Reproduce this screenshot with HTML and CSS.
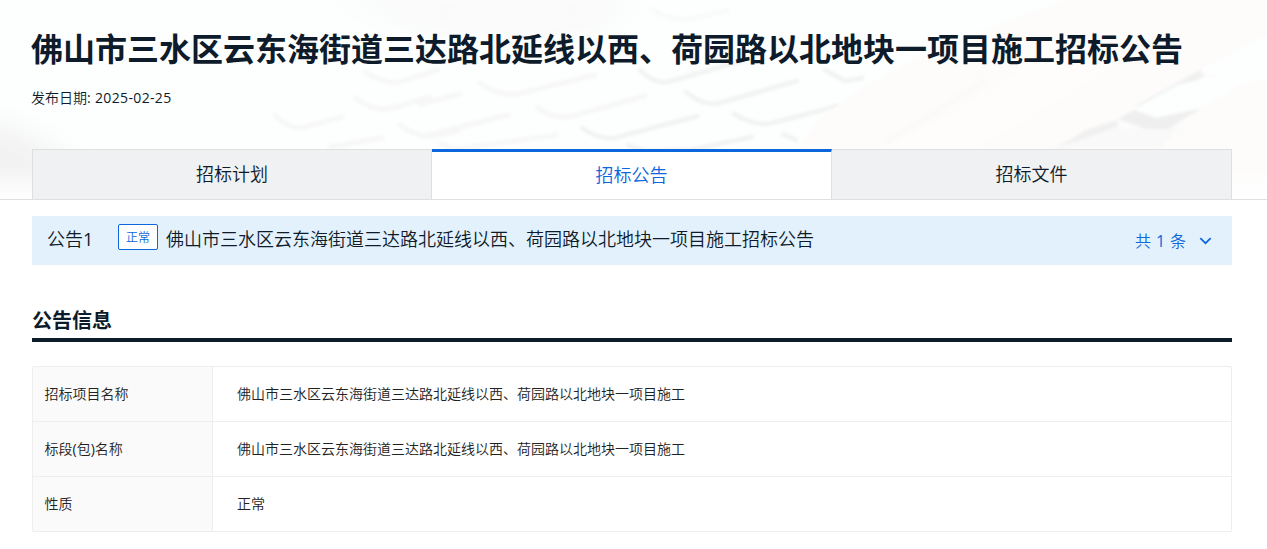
FILE: index.html
```
<!DOCTYPE html>
<html lang="zh-CN">
<head>
<meta charset="utf-8">
<title>佛山市三水区云东海街道三达路北延线以西、荷园路以北地块一项目施工招标公告</title>
<link rel="stylesheet" href="styles.css">
</head>
<body>
<header class="hero">
  <svg class="hero-art" width="1267" height="199" viewBox="0 0 1267 199" aria-hidden="true">
    <defs>
      <filter id="soft" x="-10%" y="-20%" width="120%" height="140%"><feGaussianBlur stdDeviation="1.8"/></filter>
      <filter id="wide" x="-30%" y="-30%" width="160%" height="160%"><feGaussianBlur stdDeviation="14"/></filter>
      <linearGradient id="fade" x1="0" y1="0" x2="0" y2="1"><stop offset="0" stop-color="#fff" stop-opacity="0"/><stop offset="1" stop-color="#fff"/></linearGradient>
    </defs>
    <rect width="1267" height="199" fill="#fdfefe"/>
    <path d="M-50 105L50 145L110 220H-50Z" fill="#f2f2f2" filter="url(#wide)"/>
    <path d="M330 -10H640L600 35L420 35Z" fill="#fafafa" filter="url(#wide)"/>
    <!-- Keyboard keys -->
    <g fill="none" stroke="#f7f7f7" stroke-width="5" stroke-linejoin="round" stroke-linecap="round" filter="url(#soft)">
      <path d="M275 115Q290 131 305 127L342 117M330 147L382 138M355 98Q375 113 392 108L430 97M400 125Q422 141 440 135L458 131"/>
      <path d="M365 72Q388 86 402 81L438 70M420 104L460 94M425 136L508 115M440 144L456 149L557 135M480 83Q500 97 518 94L595 75M537 107Q553 120 573 116L645 96"/>
    </g>
    <g fill="none" stroke="#f2f2f3" stroke-width="4.5" stroke-linejoin="round" stroke-linecap="round" filter="url(#soft)">
      <path d="M582 128Q600 140 614 138L698 116M628 145L645 151L690 150L752 137"/>
      <path d="M640 70Q654 84 668 82L745 60M686 92Q704 107 720 103L797 81M734 114Q756 127 772 123L838 106M783 134L796 140M825 70L845 81L862 78"/>
    </g>
    <path d="M500 30Q520 39 540 35L590 22M650 8Q670 22 690 19L730 10" fill="none" stroke="#fafafa" stroke-width="5" filter="url(#soft)"/>
    <!-- Hands resting over the keys -->
    <path d="M1267 -5H1080L940 46L862 88L818 120L798 149L850 199H1267Z" fill="#fdfcfb" filter="url(#soft)"/>
    <path d="M880 149L960 109L1040 57L1100 35L1130 55L1035 115L970 149Z" fill="#fefdfc" filter="url(#soft)"/>
    <path d="M885 142L926 118L986 80" fill="none" stroke="#fbfaf8" stroke-width="7" filter="url(#soft)"/>
    <path d="M1267 36L1202 70L1240 84L1267 77Z" fill="#fdffff" filter="url(#soft)"/>
    <g filter="url(#soft)">
      <path d="M1045 149L1084 134L1116 121L1120 128L1180 126L1160 149Z" fill="#f9f9f9"/>
      <path d="M1060 146L1084 131L1116 120L1119 126L1080 140Z" fill="#f0f0f1"/>
      <path d="M1135 106L1200 70L1204 76L1150 110Z" fill="#f1f1f1"/>
      <path d="M1118 119L1134 110L1156 118L1202 108L1168 129H1146Z" fill="#efeff0"/>
      <path d="M1136 108L1178 85L1213 77L1240 84L1202 107L1156 117Z" fill="#fdffff"/>
    </g>
    <rect y="165" width="1267" height="34" fill="url(#fade)"/>
  </svg>
  <div class="hero-body">
    <h1 class="title">佛山市三水区云东海街道三达路北延线以西、荷园路以北地块一项目施工招标公告</h1>
    <p class="date">发布日期<span class="latin date-value">: 2025-02-25</span></p>
    <nav class="tabs">
      <a class="tab">招标计划</a>
      <a class="tab tab-active">招标公告</a>
      <a class="tab">招标文件</a>
    </nav>
  </div>
</header>
<main class="content">
  <div class="notice">
    <span class="notice-index">公告<span class="latin">1</span></span>
    <span class="tag">正常</span>
    <span class="notice-title">佛山市三水区云东海街道三达路北延线以西、荷园路以北地块一项目施工招标公告</span>
    <span class="count">共 <span class="latin">1</span> 条</span>
    <svg class="chevron" width="14" height="14" viewBox="0 0 14 14"><path d="M2.3 4.2L7.5 9.2L12.7 4.2" fill="none" stroke="currentColor" stroke-width="1.7"/></svg>
  </div>
  <h2 class="section-title">公告信息</h2>
  <dl class="info">
    <dt>招标项目名称</dt><dd>佛山市三水区云东海街道三达路北延线以西、荷园路以北地块一项目施工</dd>
    <dt>标段<span class="latin">(</span>包<span class="latin">)</span>名称</dt><dd>佛山市三水区云东海街道三达路北延线以西、荷园路以北地块一项目施工</dd>
    <dt>性质</dt><dd>正常</dd>
  </dl>
</main>
</body>
</html>
```
FILE: styles.css
```
* { box-sizing: border-box; }
body {
  margin: 0;
  height: 549px;
  overflow: hidden;
  background: #fff;
  color: #0d1b2a;
  font-family: "Open Sans", "Noto Sans CJK SC", sans-serif;
  font-size: 14px;
  font-weight: 350;
}
.latin { font-weight: 400; }
.hero {
  position: relative;
  height: 200px;
  border-bottom: 1px solid #dfdfe1;
}
.hero-art { position: absolute; top: 0; left: 0; }
.hero-body {
  position: relative;
  width: 1200px;
  margin-left: 32px;
  padding-top: 25px;
}
.title {
  margin: 0 0 0 -1px;
  font-size: 32px;
  line-height: 48px;
  font-weight: 700;
  white-space: nowrap;
}
.date { margin: 14px 0 0 -1px; line-height: 22px; }
.date-value { letter-spacing: 0.35px; }
.tabs {
  display: grid;
  grid-template-columns: 399px 400px 400px;
  height: 50px;
  margin-top: 40px;
  border-left: 1px solid #dfdfe1;
}
.tab {
  background: #f0f1f3;
  border-top: 1px solid #dfdfe1;
  border-right: 1px solid #dfdfe1;
  font-size: 18px;
  line-height: 49px;
  text-align: center;
}
.tab-active {
  background: #fff;
  border-top: 3px solid #0c66dc;
  color: #0c66dc;
  line-height: 47px;
}
.content { width: 1200px; margin: 16px 0 0 32px; }
.notice {
  display: flex;
  align-items: center;
  height: 49px;
  padding: 0 20px 0 15px;
  background: #e3f1fd;
  font-size: 18px;
}
.notice-index { width: 71px; line-height: 26px; padding-bottom: 4px; }
.tag {
  width: 40px;
  height: 26px;
  margin: 0 8px 7px 0;
  border: 1px solid #0c66dc;
  border-radius: 2px;
  background: #fff;
  color: #0c66dc;
  font-size: 12px;
  line-height: 25px;
  text-align: center;
}
.notice-title { flex: 1; line-height: 26px; padding-bottom: 4px; }
.count { font-size: 16px; line-height: 24px; color: #0c66dc; word-spacing: 0.8px; }
.chevron { margin-left: 12px; color: #0c66dc; }
.section-title {
  margin: 40px 0 0 0;
  height: 37px;
  border-bottom: 4px solid #0d1b2a;
  font-size: 20px;
  line-height: 32px;
  font-weight: 700;
}
.info {
  display: grid;
  grid-template-columns: 180px 1fr;
  margin: 24px 0 0;
  border: 1px solid #eeeeee;
  border-bottom: 0;
  border-radius: 2px;
  color: #222;
}
.info dt, .info dd {
  height: 55px;
  margin: 0;
  border-bottom: 1px solid #eeeeee;
  line-height: 54px;
}
.info dt { padding-left: 11.5px; background: #fafafa; border-right: 1px solid #eeeeee; }
.info dd { padding-left: 24px; }
```
